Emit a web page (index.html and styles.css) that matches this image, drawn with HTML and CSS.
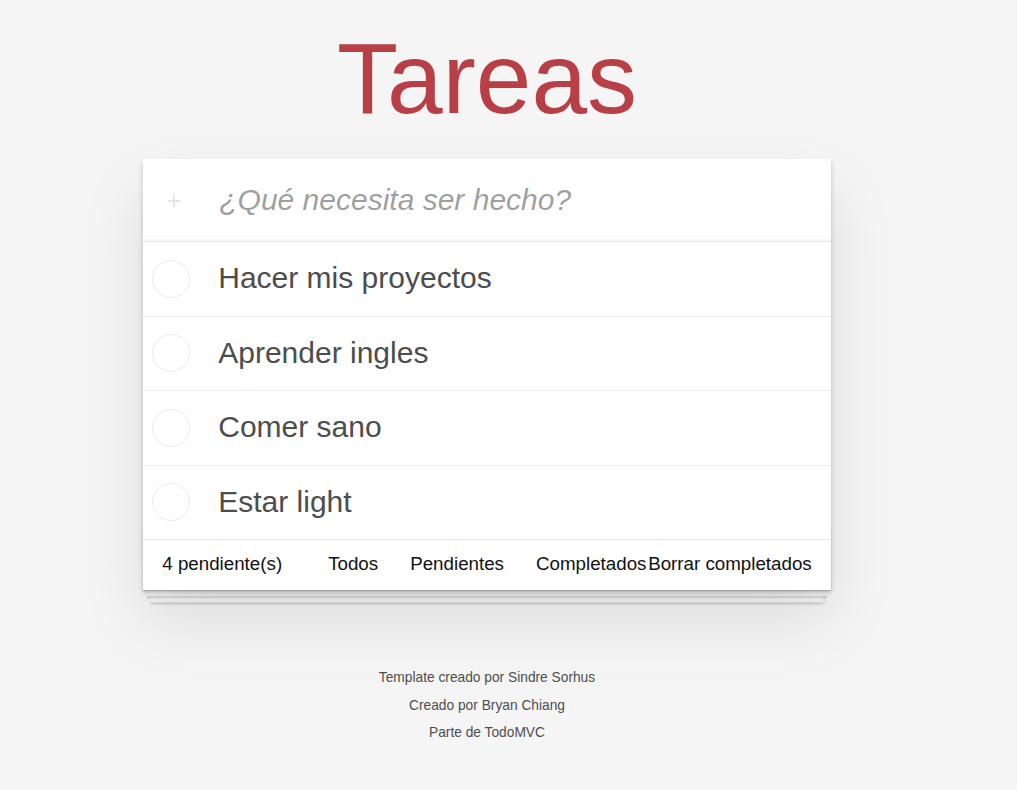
FILE: index.html
```html
<!DOCTYPE html>
<html lang="es">
<head>
<meta charset="utf-8">
<title>Tareas</title>
<link rel="stylesheet" href="styles.css">
</head>
<body>
<div class="page">
  <h1 class="title">Tareas</h1>
  <section class="todoapp">
    <header class="new-row">
      <span class="add-icon">
        <svg width="14" height="14" viewBox="0 0 14 14"><path d="M7 0.5V13.5M0.5 7H13.5" stroke="#e6e6e6" stroke-width="2" fill="none"/></svg>
      </span>
      <input class="new-todo" type="text" placeholder="¿Qué necesita ser hecho?">
    </header>
    <ul class="todo-list">
      <li class="todo"><span class="toggle"></span><label class="todo-label">Hacer mis proyectos</label></li>
      <li class="todo"><span class="toggle"></span><label class="todo-label">Aprender ingles</label></li>
      <li class="todo"><span class="toggle"></span><label class="todo-label">Comer sano</label></li>
      <li class="todo"><span class="toggle"></span><label class="todo-label">Estar light</label></li>
    </ul>
    <footer class="footer">
      <span class="todo-count">4 pendiente(s)</span>
      <ul class="filters">
        <li><a class="filter-link">Todos</a></li>
        <li><a class="filter-link">Pendientes</a></li>
        <li><a class="filter-link">Completados</a></li>
      </ul>
      <button class="clear-completed">Borrar completados</button>
    </footer>
  </section>
  <footer class="info">
    <p>Template creado por Sindre Sorhus</p>
    <p>Creado por Bryan Chiang</p>
    <p>Parte de TodoMVC</p>
  </footer>
</div>
</body>
</html>
```
FILE: styles.css
```css
html, body {
  margin: 0;
  padding: 0;
}

body {
  background: #f5f5f5;
  font-family: "Liberation Sans", Arial, Helvetica, sans-serif;
  color: #111;
  -webkit-font-smoothing: antialiased;
}

.page {
  padding: 28px 43px 0 0;
}

.title {
  margin: 0 0 31px;
  font-size: 100px;
  line-height: 100px;
  font-weight: 400;
  color: #b83f45;
  text-align: center;
  text-rendering: optimizeLegibility;
}

.todoapp {
  position: relative;
  width: 687.5px;
  margin: 0 auto;
  background: #fff;
  box-shadow: 0 2.5px 5px rgba(0, 0, 0, 0.2), 0 31px 62px rgba(0, 0, 0, 0.1);
}

.new-row {
  display: flex;
  align-items: center;
  box-shadow: inset 0 -2px 1px rgba(0, 0, 0, 0.03);
}

.add-icon {
  display: flex;
  width: 14px;
  height: 14px;
  margin: 2px 0 0 24px;
}

.new-todo {
  flex: 1;
  min-width: 0;
  margin: 0 0 0 38px;
  padding: 20px 20px 20px 0;
  border: 0;
  outline: none;
  background: transparent;
  font-family: inherit;
  font-size: 30px;
  line-height: 42px;
  height: 82px;
  box-sizing: border-box;
  color: #4d4d4d;
}

.new-todo::placeholder {
  font-style: italic;
  color: rgba(0, 0, 0, 0.4);
}

.todo-list {
  margin: 0;
  padding: 0;
  list-style: none;
  border-top: 1px solid #e6e6e6;
}

.todo {
  display: flex;
  align-items: center;
  border-bottom: 1px solid #ededed;
}

.todo:last-child {
  border-bottom: 0;
}

.toggle {
  flex: none;
  width: 36px;
  height: 36px;
  margin-left: 9px;
  border: 1px solid #ebebeb;
  border-radius: 50%;
}

.todo-label {
  margin-left: 28px;
  padding: 18px 0 19.5px;
  font-size: 30px;
  line-height: 36px;
  color: #4d4d4d;
}

.footer {
  position: relative;
  display: flex;
  align-items: center;
  height: 25px;
  padding: 11px 19px 14px;
  border-top: 1px solid #e6e6e6;
  font-size: 18.75px;
  color: #111;
  white-space: nowrap;
}

.footer::before {
  content: "";
  position: absolute;
  left: 0;
  right: 0;
  bottom: 0;
  height: 62px;
  overflow: hidden;
  z-index: -1;
  box-shadow: 0 1.25px 1.25px rgba(0, 0, 0, 0.2),
    0 10px 0 -3.75px #f6f6f6,
    0 11.25px 1.25px -3.75px rgba(0, 0, 0, 0.2),
    0 20px 0 -7.5px #f6f6f6,
    0 21.25px 2.5px -7.5px rgba(0, 0, 0, 0.2);
}

.todo-count {
  flex: none;
  line-height: 25px;
}

.filters {
  flex: none;
  display: flex;
  gap: 32px;
  margin: 0 0 0 46px;
  padding: 0;
  list-style: none;
}

.filter-link {
  line-height: 25px;
  color: #111;
  cursor: pointer;
}

.clear-completed {
  flex: none;
  margin-left: auto;
  padding: 0;
  border: 0;
  background: none;
  font-family: inherit;
  font-size: 18.75px;
  line-height: 25px;
  color: #111;
  white-space: nowrap;
}

.info {
  margin: 81.25px auto 0;
  font-size: 13.75px;
  color: #4d4d4d;
  text-align: center;
  text-shadow: 0 1px 0 rgba(255, 255, 255, 0.5);
}

.info p {
  line-height: 1;
  margin: 13.75px 0;
}
```
